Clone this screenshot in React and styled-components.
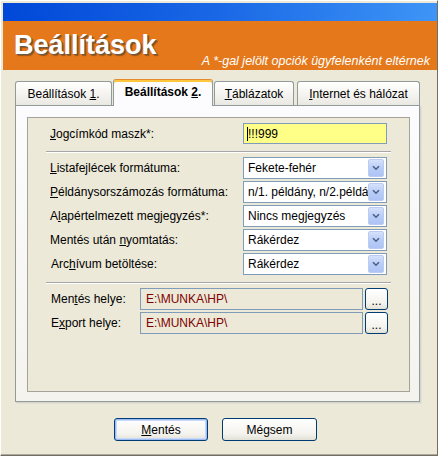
import React from "react";
import styled, { createGlobalStyle, css } from "styled-components";

const GlobalStyle = createGlobalStyle`
  html, body {
    margin: 0;
    padding: 0;
    background: #ece9d8;
  }
  body {
    font-family: "Liberation Sans", Arial, sans-serif;
    font-size: 12px;
    color: #000;
  }
`;

const Window = styled.div`
  box-sizing: border-box;
  width: 438px;
  height: 456px;
  padding: 2px 0 0 2px;
  background: #ece9d8;
  border: 1px solid;
  border-color: #fffffb #716f64 #716f64 #fffffb;
  box-shadow: inset 0 -1px 0 #aca899;
  display: flex;
  flex-direction: column;
`;

const TitleBar = styled.div`
  height: 18px;
  background: linear-gradient(90deg, #0048d8 0%, #1a68e6 50%, #3e95f6 100%);
`;

const Banner = styled.div`
  box-sizing: border-box;
  height: 49px;
  padding: 11px 7px 0 11px;
  background: #e4781a;
  display: flex;
  justify-content: space-between;
`;

const Title = styled.h1`
  margin: 0;
  font-size: 27px;
  line-height: 27px;
  font-weight: bold;
  color: #fff;
  text-shadow: 1px 1px 0 #6b5a48, 2px 2px 1px rgba(60, 40, 20, 0.45);
`;

const Hint = styled.div`
  align-self: flex-end;
  margin-bottom: 2px;
  font-size: 12.5px;
  line-height: 14px;
  font-style: italic;
  color: #fff;
  white-space: nowrap;
`;

const Body = styled.div`
  flex: 1;
  padding: 9px 17px 0 12px;
  display: flex;
  flex-direction: column;
`;

const TabStrip = styled.div`
  display: flex;
  align-items: flex-end;
  height: 26px;
  position: relative;
  z-index: 1;
`;

const Tab = styled.div`
  box-sizing: border-box;
  width: ${(p) => p.$width}px;
  margin-left: ${(p) => p.$gap || 0}px;
  height: 24px;
  border: 1px solid #919b9c;
  border-bottom: none;
  border-radius: 3px 3px 0 0;
  background: linear-gradient(#fffffe, #f3f2ee 60%, #e9e8e2);
  display: flex;
  align-items: center;
  justify-content: center;
  padding-top: 1px;
  font-size: 12px;
  white-space: nowrap;

  ${(p) =>
    p.$active &&
    css`
      height: 27px;
      margin-bottom: -1px;
      border-top: 1px solid #e68b2c;
      box-shadow: inset 0 2px 0 #ffc73c;
      background: #fcfcfe;
      font-weight: bold;
      padding-top: 0;
      padding-bottom: 3px;
    `}
`;

const Key = styled.span`
  text-decoration: underline;
`;

const TabPanel = styled.div`
  box-sizing: border-box;
  height: 297px;
  padding: 11px 9px 9px 11px;
  border: 1px solid #919b9c;
  background: linear-gradient(#fcfcfe, #f4f3ee);
  box-shadow: 1px 1px 0 #d6d4c8, 2px 2px 0 #e2e0d4;
  display: flex;
`;

const Group = styled.div`
  flex: 1;
  padding: 5px 22px 0 22px;
  border: 1px solid #a5a399;
  background: #ece9d8;
  display: flex;
  flex-direction: column;
`;

const Stack = styled.div`
  display: flex;
  flex-direction: column;
  gap: 2px;
`;

const FieldRow = styled.div`
  display: grid;
  grid-template-columns: 1fr 144px;
  align-items: center;
  height: ${(p) => p.$h || 22}px;
`;

const PathRow = styled.div`
  display: grid;
  grid-template-columns: 87px 1fr 23px;
  column-gap: 2px;
  align-items: center;
  height: 22px;
  margin-right: -1px;
  padding-left: 1px;
`;

const Label = styled.label`
  font-size: 12px;
  white-space: nowrap;
  padding-left: ${(p) => p.$indent || 0}px;
`;

const Separator = styled.div`
  margin: ${(p) => p.$top}px -4px 4px -4px;
  border-top: 1px solid #a7a6aa;
  border-bottom: 1px solid #fff;
  height: 0;
`;

const TextInput = styled.div`
  box-sizing: border-box;
  height: 21px;
  border: 1px solid #7f9db9;
  background: #ffff88;
  padding-left: 3px;
  display: flex;
  align-items: center;
  font-size: 12px;

  &::before {
    content: "";
    width: 1px;
    height: 14px;
    background: #000;
  }
`;

const Select = styled.div`
  box-sizing: border-box;
  height: 22px;
  border: 1px solid #7f9db9;
  background: #fff;
  display: flex;
  align-items: center;
  padding: 1px;
  overflow: hidden;
`;

const SelectText = styled.span`
  flex: 1;
  min-width: 0;
  padding-left: 3px;
  white-space: nowrap;
  overflow: hidden;
  font-size: 12px;
`;

const DropButton = styled.span`
  box-sizing: border-box;
  flex: none;
  width: 16px;
  height: 18px;
  margin-right: 1px;
  border: 1px solid #bccbf1;
  border-radius: 2px;
  background: linear-gradient(#d6e1fc, #b9cdf8 50%, #adc3f4);
  display: flex;
  align-items: center;
  justify-content: center;
`;

const PathField = styled.div`
  box-sizing: border-box;
  height: 22px;
  border: 1px solid #7f9db9;
  background: #ece9d8;
  color: #800000;
  padding-left: 5px;
  display: flex;
  align-items: center;
  font-size: 12px;
`;

const XpButton = styled.button`
  box-sizing: border-box;
  height: ${(p) => p.$h || 23}px;
  width: ${(p) => p.$w}px;
  border: 1px solid #003c74;
  border-radius: 3px;
  background: linear-gradient(#ffffff, #f4f3ee 70%, #e3e1d6);
  font-family: "Liberation Sans", Arial, sans-serif;
  font-size: 12px;
  color: #000;
  padding: 0;
  display: flex;
  align-items: center;
  justify-content: center;

  ${(p) =>
    p.$default &&
    css`
      box-shadow: inset 0 0 0 1px #9ebcf0, inset 0 0 0 2px #c6d9fa;
    `}
`;

const Dots = styled.span`
  padding-top: 4px;
`;

const ButtonBar = styled.div`
  display: flex;
  justify-content: center;
  gap: 14px;
  margin-top: 16px;
  margin-left: -4px;
`;

const Chevron = () => (
  <svg width="8" height="6" viewBox="0 0 8 6">
    <path d="M1 1.2 L4 4.2 L7 1.2" fill="none" stroke="#4d6185" strokeWidth="1.6" />
  </svg>
);

const selects = [
  { label: <><Key>L</Key>istafejlécek formátuma:</>, value: "Fekete-fehér" },
  { label: <><Key>P</Key>éldánysorszámozás formátuma:</>, value: "n/1. példány, n/2.példány" },
  { label: <>A<Key>l</Key>apértelmezett megjegyzés*:</>, value: "Nincs megjegyzés" },
  { label: <>Mentés után <Key>n</Key>yomtatás:</>, value: "Rákérdez" },
  { label: <>Arc<Key>h</Key>ívum betöltése:</>, value: "Rákérdez", indent: 1 },
];

export default function App() {
  return (
    <>
      <GlobalStyle />
      <Window>
        <TitleBar />
        <Banner>
          <Title>Beállítások</Title>
          <Hint>A *-gal jelölt opciók ügyfelenként eltérnek</Hint>
        </Banner>
        <Body>
          <TabStrip>
            <Tab $width={97}>
              <span>
                Beállítások <Key>1</Key>.
              </span>
            </Tab>
            <Tab $width={100} $gap={1} $active>
              <span>
                Beállítások <Key>2</Key>.
              </span>
            </Tab>
            <Tab $width={80} $gap={1}>
              <span>
                <Key>T</Key>áblázatok
              </span>
            </Tab>
            <Tab $width={123} $gap={3}>
              <span>
                <Key>I</Key>nternet és hálózat
              </span>
            </Tab>
          </TabStrip>
          <TabPanel>
            <Group>
              <FieldRow $h={21}>
                <Label>
                  <Key>J</Key>ogcímkód maszk*:
                </Label>
                <TextInput>!!!999</TextInput>
              </FieldRow>
              <Separator $top={7} />
              <Stack>
                {selects.map((s, i) => (
                  <FieldRow key={i}>
                    <Label $indent={s.indent}>{s.label}</Label>
                    <Select>
                      <SelectText>{s.value}</SelectText>
                      <DropButton>
                        <Chevron />
                      </DropButton>
                    </Select>
                  </FieldRow>
                ))}
              </Stack>
              <Separator $top={7} />
              <Stack>
                <PathRow>
                  <Label>
                    Men<Key>t</Key>és helye:
                  </Label>
                  <PathField>E:\MUNKA\HP\</PathField>
                  <XpButton $w={23} $h={22}>
                    <Dots>...</Dots>
                  </XpButton>
                </PathRow>
                <PathRow>
                  <Label>
                    E<Key>x</Key>port helye:
                  </Label>
                  <PathField>E:\MUNKA\HP\</PathField>
                  <XpButton $w={23} $h={22}>
                    <Dots>...</Dots>
                  </XpButton>
                </PathRow>
              </Stack>
            </Group>
          </TabPanel>
          <ButtonBar>
            <XpButton $w={94} $default>
              <Key>M</Key>entés
            </XpButton>
            <XpButton $w={95}>
              Mé<Key>g</Key>sem
            </XpButton>
          </ButtonBar>
        </Body>
      </Window>
    </>
  );
}
